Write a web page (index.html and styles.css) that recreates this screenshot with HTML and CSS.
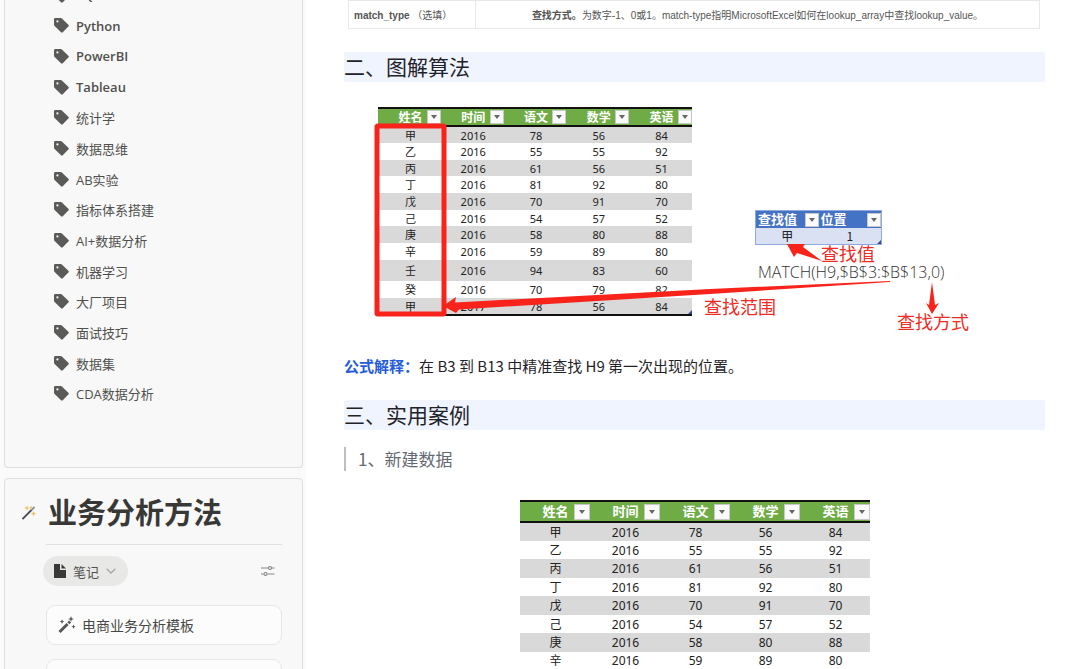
FILE: index.html
```html
<!DOCTYPE html>
<html lang="zh-CN">
<head>
    <meta charset="UTF-8">
    <meta name="viewport" content="width=device-width, initial-scale=1.0">
    <title>MATCH 函数</title>
    <link rel="stylesheet" href="styles.css">
</head>
<body>
    <svg width="0" height="0" class="sprite">
        <symbol id="tag" viewBox="0 0 14 14">
            <path fill-rule="evenodd" d="M0 1.2Q0 0 1.2 0H6.2Q7 0 7.6 .6L13.4 6.3Q14.300 7.200 13.4 8L8.200 13.300Q7.400 14.100 6.600 13.300L.8 7.700Q0 7 0 6.200ZM3.200 2.200A1 1 0 1 0 3.200 4.200A1 1 0 1 0 3.200 2.200Z"/>
        </symbol>
    </svg>

    <aside class="sidebar">
        <nav class="card topics">
            <ul>
                <li><a href="#"><svg class="tag"><use href="#tag"/></svg>SQL</a></li>
                <li><a href="#"><svg class="tag"><use href="#tag"/></svg>Python</a></li>
                <li><a href="#"><svg class="tag"><use href="#tag"/></svg>PowerBI</a></li>
                <li><a href="#"><svg class="tag"><use href="#tag"/></svg>Tableau</a></li>
                <li><a href="#"><svg class="tag"><use href="#tag"/></svg>统计学</a></li>
                <li><a href="#"><svg class="tag"><use href="#tag"/></svg>数据思维</a></li>
                <li><a href="#"><svg class="tag"><use href="#tag"/></svg>AB实验</a></li>
                <li><a href="#"><svg class="tag"><use href="#tag"/></svg>指标体系搭建</a></li>
                <li><a href="#"><svg class="tag"><use href="#tag"/></svg>AI+数据分析</a></li>
                <li><a href="#"><svg class="tag"><use href="#tag"/></svg>机器学习</a></li>
                <li><a href="#"><svg class="tag"><use href="#tag"/></svg>大厂项目</a></li>
                <li><a href="#"><svg class="tag"><use href="#tag"/></svg>面试技巧</a></li>
                <li><a href="#"><svg class="tag"><use href="#tag"/></svg>数据集</a></li>
                <li><a href="#"><svg class="tag"><use href="#tag"/></svg>CDA数据分析</a></li>
            </ul>
        </nav>

        <section class="card methods">
            <div class="methods-title">
                <svg width="14" height="14" viewBox="0 0 14 14">
                    <path d="M.5 13L9.500 4" stroke="#4a4f55" stroke-width="1.800"/>
                    <path d="M9.500 4L12.500 1" stroke="#8a8f94" stroke-width="1.800"/>
                    <path d="M5 0l.6 1.600L7.200 2l-1.600.6L5 4.200l-.6-1.600L2.800 2l1.600-.4zM11.500 5.500l.6 1.600 1.600.5-1.600.6-.6 1.600-.6-1.600-1.600-.6 1.600-.5zM9 .2l.4 1 1 .3-1 .4-.4 1-.4-1-1-.4 1-.3z" fill="#e9bf5f" stroke="#e9bf5f" stroke-width=".4"/>
                </svg>
                <h1>业务分析方法</h1>
            </div>
            <div class="toolbar">
                <button class="view">
                    <svg width="12" height="14" viewBox="0 0 12 14"><path d="M0 0H6V6H12V14H0ZM7.500 0L12 4.600H7.500Z" fill="#383836"/></svg>
                    笔记
                    <svg width="10" height="6" viewBox="0 0 10 6"><path d="M.7.7L5 5L9.300.7" fill="none" stroke="#a8a8a6" stroke-width="1.300"/></svg>
                </button>
                <button class="settings" aria-label="设置">
                    <svg width="14" height="12" viewBox="0 0 14 12" fill="none" stroke="#858583" stroke-width="1.200"><path d="M0 3H7M11 3H13.500M0 9H2.500M6.500 9H13.500"/><circle cx="9" cy="3" r="1.500"/><circle cx="4.500" cy="9" r="1.500"/></svg>
                </button>
            </div>
            <a class="note" href="#">
                <svg width="18" height="18" viewBox="0 0 18 18" fill="#555553"><path d="M.5 15L8.500 7L10.600 9.100L2.600 17.100ZM9.300 6.200L11 4.500L13.100 6.600L11.400 8.300Z"/><path d="M13 0l.8 2.200 2.200.8-2.200.8L13 6l-.8-2.200L10 3l2.200-.8zM4 3.200l.7 1.700 1.700.7-1.700.7L4 8l-.7-1.700-1.700-.7 1.700-.7zM15.500 8.500l.6 1.600 1.600.6-1.600.6-.6 1.600-.6-1.600-1.600-.6 1.600-.6z"/></svg>
                电商业务分析模板
            </a>
            <a class="note" href="#"></a>
        </section>
    </aside>

    <main>
        <table class="params">
            <tr>
                <td><b>match_type</b> （选填）</td>
                <td><b>查找方式。</b>为数字-1、0或1。match-type指明MicrosoftExcel如何在lookup_array中查找lookup_value。</td>
            </tr>
        </table>

        <h2>二、图解算法</h2>

        <div class="figure">
            <table class="grades">
                <thead>
                    <tr>
                        <th>姓名<button class="filter" aria-label="筛选姓名"></button></th>
                        <th>时间<button class="filter" aria-label="筛选时间"></button></th>
                        <th>语文<button class="filter" aria-label="筛选语文"></button></th>
                        <th>数学<button class="filter" aria-label="筛选数学"></button></th>
                        <th>英语<button class="filter" aria-label="筛选英语"></button></th>
                    </tr>
                </thead>
                <tbody>
                    <tr><td>甲</td><td>2016</td><td>78</td><td>56</td><td>84</td></tr>
                    <tr><td>乙</td><td>2016</td><td>55</td><td>55</td><td>92</td></tr>
                    <tr><td>丙</td><td>2016</td><td>61</td><td>56</td><td>51</td></tr>
                    <tr><td>丁</td><td>2016</td><td>81</td><td>92</td><td>80</td></tr>
                    <tr><td>戊</td><td>2016</td><td>70</td><td>91</td><td>70</td></tr>
                    <tr><td>己</td><td>2016</td><td>54</td><td>57</td><td>52</td></tr>
                    <tr><td>庚</td><td>2016</td><td>58</td><td>80</td><td>88</td></tr>
                    <tr><td>辛</td><td>2016</td><td>59</td><td>89</td><td>80</td></tr>
                    <tr class="tall"><td>壬</td><td>2016</td><td>94</td><td>83</td><td>60</td></tr>
                    <tr><td>癸</td><td>2016</td><td>70</td><td>79</td><td>82</td></tr>
                    <tr><td>甲</td><td>2017</td><td>78</td><td>56</td><td class="corner">84</td></tr>
                </tbody>
            </table>
            <div class="formula">
                <table class="lookup">
                    <tr>
                        <th>查找值<button class="filter" aria-label="筛选查找值"></button></th>
                        <th>位置<button class="filter" aria-label="筛选位置"></button></th>
                    </tr>
                    <tr><td>甲</td><td class="corner">1</td></tr>
                </table>
                <p>MATCH(H9,$B$3:$B$13,0)</p>
            </div>
            <!-- red marks over the tables -->
            <svg class="marks" width="640" height="250" viewBox="0 0 640 250" fill="#f8231a">
                <rect x="33" y="44" width="67" height="188" rx="1" fill="none" stroke="#f8231a" stroke-width="5"/>
                <path d="M99 224L112 215L111 220.500L366 207L546 199V200L366 212L115 227.500L112 231Z"/>
                <path d="M443 162L461 162L459 165L478 179L453 171L450 175Z"/>
                <path d="M588 200L591 223L595 221L588 232L582 221L585 223Z"/>
            </svg>
            <span class="label label-value">查找值</span>
            <span class="label label-range">查找范围</span>
            <span class="label label-mode">查找方式</span>
        </div>

        <p class="explain"><b>公式解释：</b>在 B3 到 B13 中精准查找 H9 第一次出现的位置。</p>

        <h2>三、实用案例</h2>

        <blockquote>1、新建数据</blockquote>

        <table class="grades large">
            <thead>
                <tr>
                    <th>姓名<button class="filter" aria-label="筛选姓名"></button></th>
                    <th>时间<button class="filter" aria-label="筛选时间"></button></th>
                    <th>语文<button class="filter" aria-label="筛选语文"></button></th>
                    <th>数学<button class="filter" aria-label="筛选数学"></button></th>
                    <th>英语<button class="filter" aria-label="筛选英语"></button></th>
                </tr>
            </thead>
            <tbody>
                <tr><td>甲</td><td>2016</td><td>78</td><td>56</td><td>84</td></tr>
                <tr><td>乙</td><td>2016</td><td>55</td><td>55</td><td>92</td></tr>
                <tr><td>丙</td><td>2016</td><td>61</td><td>56</td><td>51</td></tr>
                <tr><td>丁</td><td>2016</td><td>81</td><td>92</td><td>80</td></tr>
                <tr><td>戊</td><td>2016</td><td>70</td><td>91</td><td>70</td></tr>
                <tr><td>己</td><td>2016</td><td>54</td><td>57</td><td>52</td></tr>
                <tr><td>庚</td><td>2016</td><td>58</td><td>80</td><td>88</td></tr>
                <tr><td>辛</td><td>2016</td><td>59</td><td>89</td><td>80</td></tr>
            </tbody>
        </table>
    </main>
</body>
</html>
```
FILE: styles.css
```css
* { box-sizing: border-box; }
body { margin: 0; height: 100vh; overflow: hidden; display: flex; background: #fff; font-family: "Noto Sans CJK SC", sans-serif; color: #1f2329; }
h1, h2, p, ul, blockquote { margin: 0; padding: 0; }
button { padding: 0; border: none; background: none; font-family: inherit; cursor: pointer; }
a { color: inherit; text-decoration: none; }
table { border-collapse: collapse; }
.sprite { position: absolute; }

/* sidebar */
.sidebar { flex: 0 0 306px; display: flex; flex-direction: column; gap: 10px; padding: 0 3px 0 4px; background: #fafafa; font-family: "Open Sans", "Noto Sans CJK SC", sans-serif; color: #50504e; }
.card { border: 1px solid #dededd; border-radius: 4px; background: #f8f8f8; flex-shrink: 0; }
.topics { border-top: none; border-radius: 0 0 4px 4px; padding: 0 49px 58px; }
.topics ul { list-style: none; margin-top: -20px; min-height: 429px; display: flex; flex-direction: column; justify-content: space-between; }
.topics a { display: flex; align-items: center; gap: 7px; height: 30px; font-size: 13px; font-weight: 600; }
.topics li:nth-child(n+5) a { font-weight: 400; }
.tag { width: 15px; height: 15px; fill: #5a5a58; }
.methods { padding: 10px 20px 20px 17px; }
.methods-title { display: flex; align-items: center; gap: 12px; }
.methods h1 { font-size: 29px; line-height: 48px; font-weight: 700; color: #383836; }
.toolbar { display: flex; justify-content: space-between; align-items: center; margin: 7px 0 0 24px; padding-top: 11px; border-top: 1px solid #e0e0df; }
.view { display: flex; align-items: center; gap: 7px; height: 30px; margin-left: -3px; padding: 0 12px 0 11px; border-radius: 15px; background: #e8e8e6; font-size: 13px; color: #50504e; }
.settings { display: flex; margin-right: 7px; }
.note { display: flex; align-items: center; gap: 6px; height: 40px; margin: 19px 0 0 24px; padding: 0 11px; border: 1px solid #e6e6e5; border-radius: 9px; background: #fcfcfc; font-size: 14px; color: #484846; }
.note + .note { margin-top: 14px; }

/* article */
main { flex: 1; min-width: 0; padding: 0 35px 0 38px; }
.params { width: calc(100% - 9px); margin-left: 4px; font: 10px "Liberation Sans", "Noto Sans CJK SC", sans-serif; color: #555; }
.params td { height: 28px; padding: 0 6px; border: 1px solid #e8e8e8; text-align: center; }
.params td:first-child { width: 127px; padding: 0 5px; text-align: left; white-space: nowrap; }
h2 { margin-top: 23px; padding-bottom: 2px; font-size: 21px; line-height: 28px; font-weight: 400; background: #f0f4ff; border-radius: 2px; }

.figure { position: relative; display: flex; align-items: flex-start; padding: 25px 0 35px 34px; }
.grades { table-layout: fixed; width: 314px; font: 11px "Noto Sans", "Noto Sans CJK SC", sans-serif; color: #222; border-bottom: 2px solid #111; }
.grades th, .grades td { position: relative; padding: 0 0 0 2px; line-height: 15px; text-align: center; }
.grades thead { background: #6fac46; color: #fff; border-top: 2px solid #111; border-bottom: 2px solid #111; }
.grades th { height: 18px; font-size: 12px; font-weight: 700; }
.grades td { height: 17px; }
.grades tr:nth-child(3n) td { height: 16px; }
.grades .tall td { height: 21px !important; }
.grades tbody tr:nth-child(odd) { background: #d9d9d9; }
.filter { position: absolute; right: 0; bottom: 1px; width: 14px; height: 14px; background: #fafafa; border: 1px solid #c8c8c8; display: flex; align-items: center; justify-content: center; }
.filter::after { content: ""; border: 3px solid transparent; border-top: 4px solid #666; border-bottom: none; }
.corner::after { content: ""; position: absolute; right: 0; bottom: 0; border: 2px solid #3a4a8c; border-top-color: transparent; border-left-color: transparent; }

.formula { margin: 103px 0 0 63px; }
.lookup { table-layout: fixed; width: 127px; border: 1px solid #8ea9db; font-size: 12px; }
.lookup th, .lookup td { position: relative; padding: 0; height: 17px; line-height: 16px; text-align: center; }
.lookup th { padding-left: 2px; font-size: 13px; text-align: left; color: #fff; background: #4472c4; }
.lookup td { background: #d9e1f2; }
.formula p { margin: 16px 0 0 3px; font: 300 16px/22px "Open Sans", sans-serif; color: #333; }
.marks { position: absolute; left: 0; top: 0; }
.label { position: absolute; font-size: 18px; line-height: 24px; color: #ee2c24; }
.label-value { left: 477px; top: 159px; }
.label-range { left: 360px; top: 212px; }
.label-mode { left: 553px; top: 227px; }

.explain { font-size: 15px; line-height: 30px; }
.explain b { color: #245bdb; }
.explain + h2 { margin-top: 19px; }
blockquote { margin-top: 17px; padding-left: 12px; border-left: 2px solid #bbbfc4; font-size: 17px; line-height: 24px; color: #646a73; }

.large { width: 350px; margin: 29px auto 0; font-size: 12px; }
.large th { height: 21px; font-size: 13px; }
.large .filter { width: 16px; height: 16px; }
.large tbody td, .large tbody tr:nth-child(3n) td { height: 18px; }
.large tbody tr:nth-child(odd) td { height: 19px; }
```
